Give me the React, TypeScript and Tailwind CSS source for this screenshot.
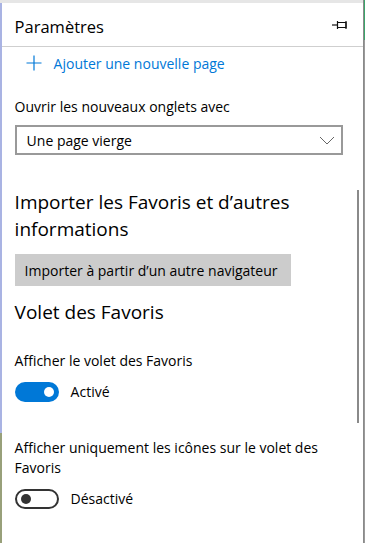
import React from "react";

const font = { fontFamily: '"Segoe UI", "Open Sans", "Noto Sans", sans-serif' };

function PinIcon() {
  return (
    <svg width="17" height="10" viewBox="0 0 17 10" fill="none" stroke="#111" strokeWidth="1.2">
      <path d="M0 5 H5" />
      <path d="M5.5 1 V9" />
      <path d="M5.5 2.5 H14 V7.5 H5.5" />
      <path d="M14 1 V9" />
    </svg>
  );
}

function Toggle({ on }: { on: boolean }) {
  return on ? (
    <div className="w-[44px] h-[20px] rounded-full bg-[#0078d7] flex items-center justify-end pr-[5px]">
      <div className="w-[10px] h-[10px] rounded-full bg-white" />
    </div>
  ) : (
    <div className="w-[44px] h-[20px] rounded-full border-2 border-[#333] flex items-center pl-[4px]">
      <div className="w-[10px] h-[10px] rounded-full bg-[#333]" />
    </div>
  );
}

export default function App() {
  return (
    <div className="w-[365px] h-[543px] flex overflow-hidden bg-white text-black" style={font}>
      {/* left window edge */}
      <div className="w-[2px] flex flex-col">
        <div className="h-[3px] bg-[#e6e6e6]" />
        <div className="flex-1 bg-[#a9b3e3]" />
        <div className="h-[110px] bg-[#98a07a]" />
      </div>

      <section className="relative flex-1 flex flex-col">
        <div className="h-[3px] bg-[#e6e6e6]" />
        <header className="h-[44px] flex items-center justify-between pl-[13px] pr-[14px] border-b border-[#cfcfcf]">
          <h1 className="text-[16.5px] leading-none pt-[5px]">Paramètres</h1>
          <PinIcon />
        </header>

        <div className="pl-[13px] pr-[20px] flex flex-col items-start">
          <div className="mt-[6px] h-[20px] flex items-center pl-[11px] gap-[12px] text-[#0078d7] text-[14px]">
            <svg width="16" height="16" viewBox="0 0 16 16" stroke="#0078d7" strokeWidth="1.2">
              <path d="M8 0.5 V15.5 M0.5 8 H15.5" />
            </svg>
            <span>Ajouter une nouvelle page</span>
          </div>

          <div className="mt-[24px] text-[14px] leading-[20px]">Ouvrir les nouveaux onglets avec</div>

          <div className="mt-[8px] w-[328px] h-[30px] border-2 border-[#999] flex items-center justify-between pl-[10px] pr-[6px] text-[14px]">
            <span>Une page vierge</span>
            <svg width="16" height="9" viewBox="0 0 16 9" fill="none" stroke="#666" strokeWidth="1">
              <path d="M1 1 L8 8 L15 1" />
            </svg>
          </div>

          <h2 className="mt-[34px] text-[19px] leading-[27px] w-[300px]">Importer les Favoris et d’autres informations</h2>

          <button className="mt-[11px] h-[32px] w-[276px] bg-[#cccccc] text-[14px] text-left pl-[10px] whitespace-nowrap">
            Importer à partir d’un autre navigateur
          </button>

          <h2 className="mt-[13px] text-[19px] leading-[27px]">Volet des Favoris</h2>

          <div className="mt-[25px] text-[14px] leading-[20px]">Afficher le volet des Favoris</div>
          <div className="mt-[10px] flex items-center gap-[12px] text-[14px]">
            <Toggle on />
            <span>Activé</span>
          </div>

          <div className="mt-[36px] text-[14px] leading-[20px] w-[315px]">
            Afficher uniquement les icônes sur le volet des Favoris
          </div>
          <div className="mt-[10px] flex items-center gap-[12px] text-[14px]">
            <Toggle on={false} />
            <span>Désactivé</span>
          </div>
        </div>

        {/* scrollbar thumb */}
        <div className="absolute left-[355px] top-[190px] w-[2px] h-[233px] bg-[#8a8a8a]" />
      </section>

      {/* right window edge */}
      <div className="w-[1px] bg-[#c8c8c8]" />
      <div className="w-[1px] bg-[#8a8a8a]" />
      <div className="w-[1px] flex flex-col">
        <div className="h-[40px] bg-[#3aa56a]" />
        <div className="flex-1 bg-[#9a9a9a]" />
      </div>
    </div>
  );
}
